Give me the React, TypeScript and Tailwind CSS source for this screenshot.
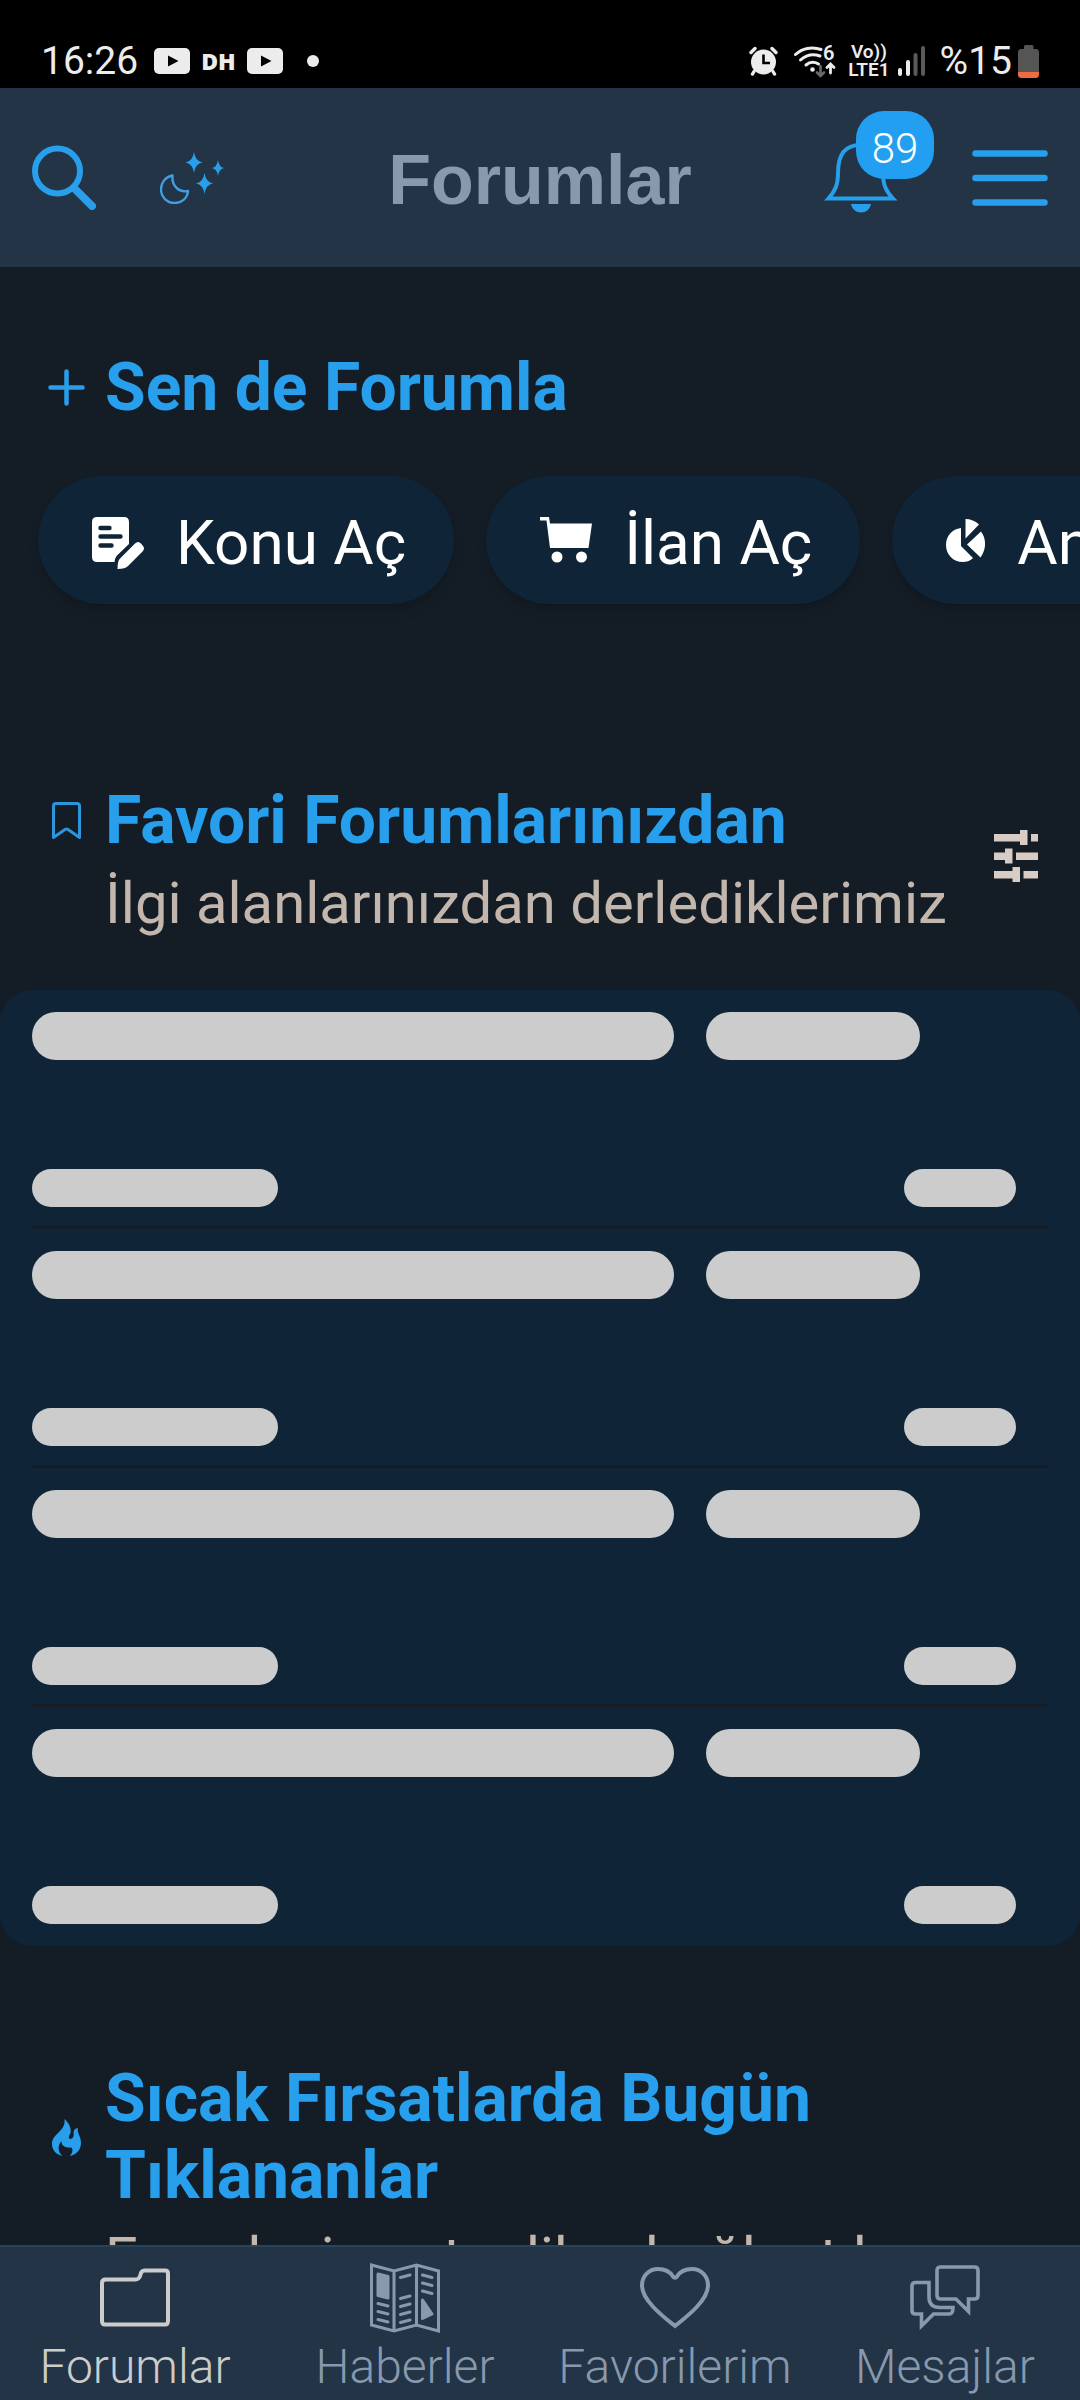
import { ReactNode } from "react";

const AlarmIcon = () => (
  <svg width="29" height="30" viewBox="0 0 29 30" fill="#ececec" aria-hidden="true">
    <circle cx="14.5" cy="16" r="12.5" />
    <path d="M2 6.5 6 2.5M27 6.5 23 2.5M5 25.5 3.5 28M24 25.5 25.5 28" stroke="#ececec" strokeWidth="3.4" strokeLinecap="round" />
    <path d="M14.5 8.5V17H21" stroke="#000" strokeWidth="2.6" fill="none" />
  </svg>
);

const WifiIcon = () => (
  <svg width="42" height="33" viewBox="0 0 42 33" fill="none" strokeLinecap="round" aria-hidden="true">
    <path d="M1.5 9.5C8 3.5 18 1 27 4.5" stroke="#ececec" strokeWidth="3" />
    <path d="M6.5 15C12 10 19 8.5 26 11" stroke="#ececec" strokeWidth="3" />
    <path d="M12 20C15.5 17 20 16.5 24.5 19" stroke="#ececec" strokeWidth="3" />
    <circle cx="18.5" cy="24.5" r="2.3" fill="#ececec" />
    <path d="M26.5 21V31M23 27.5 26.5 31 30 27.5" stroke="#6a6a6a" strokeWidth="2.6" />
    <path d="M36.500 28V19M33 22.5 36.5 19 40 22.5" stroke="#ececec" strokeWidth="2.8" />
    <text x="29" y="15" fill="#ececec" fontFamily="Roboto" fontWeight="600" fontSize="20">
      6
    </text>
  </svg>
);

const SignalIcon = () => (
  <svg width="28" height="30" viewBox="0 0 28 30" aria-hidden="true">
    <rect x="0" y="22" width="4" height="8" rx="2" fill="#ececec" />
    <rect x="8" y="14" width="4" height="16" rx="2" fill="#ececec" />
    <rect x="15.5" y="7" width="4" height="23" rx="2" fill="#5a5a5a" />
    <rect x="23" y="0" width="4" height="30" rx="2" fill="#5a5a5a" />
  </svg>
);

const BatteryIcon = () => (
  <svg width="21" height="33" viewBox="0 0 21 33" aria-hidden="true">
    <path d="M6 1.5Q6 0 7.5 0H14Q15.5 0 15.5 1.5V4H18Q21 4 21 7.5V27H0V7.5Q0 4 3 4H6Z" fill="#555" />
    <path d="M0 27H21V29.5Q21 33 17.5 33H3.5Q0 33 0 29.5Z" fill="#ee6a40" />
  </svg>
);

const VideoIcon = () => (
  <svg width="36" height="26" viewBox="0 0 36 26" aria-hidden="true">
    <rect width="36" height="26" rx="5" fill="#ececec" />
    <path d="M14 7.5V18.5L24.5 13Z" fill="#000" />
  </svg>
);

const SearchIcon = () => (
  <svg width="64" height="65" viewBox="0 0 64 65" fill="none" stroke="#279fec" aria-hidden="true">
    <circle cx="25.5" cy="26" r="22.5" strokeWidth="6" />
    <path d="M42 43 60 61" strokeWidth="8" strokeLinecap="round" />
  </svg>
);

const NightIcon = () => (
  <svg width="64" height="52" viewBox="0 0 64 52" fill="#279fec" aria-hidden="true">
    <path
      d="M12.5 23.5C5 25 1 31 1 37.5 1 45 7 51 14.5 51 22 51 27.5 46 28 39 19 41 11.5 34 12.5 23.5Z"
      fill="none"
      stroke="#3f9fe0"
      strokeWidth="2.4"
      strokeLinejoin="round"
    />
    <path d="M34 0Q35.5 9.5 42.5 10.5 35.5 11.5 34 21 32.5 11.5 25.5 10.5 32.5 9.5 34 0Z" />
    <path d="M58 8Q59 15 64 16 59 17 58 24 57 17 52 16 57 15 58 8Z" />
    <path d="M44.5 21Q46 30.5 53 31.5 46 32.5 44.5 42 43 32.5 36 31.5 43 30.5 44.5 21Z" />
  </svg>
);

const BellIcon = () => (
  <svg width="74" height="70" viewBox="0 0 74 70" aria-hidden="true">
    <path
      d="M4.5 55.5C11 48 14 42 14 30 14 10 22 2 36.5 2S59 10 59 30C59 42 62 48 69 55.5Z"
      fill="none"
      stroke="#279fec"
      strokeWidth="4"
    />
    <path d="M27 61H47C46 66 42 69.5 37 69.5S28 66 27 61Z" fill="#279fec" />
  </svg>
);

const MenuIcon = () => (
  <svg width="76" height="56" viewBox="0 0 76 56" stroke="#279fec" strokeWidth="6.5" strokeLinecap="round" aria-hidden="true">
    <path d="M3.5 3.5H72.5M3.5 28H72.5M3.5 52.5H72.5" />
  </svg>
);

const PlusIcon = () => (
  <svg width="37" height="37" viewBox="0 0 37 37" stroke="#279fec" strokeWidth="4.5" strokeLinecap="round" aria-hidden="true">
    <path d="M18.5 2.5V34.5M2.5 18.5H34.5" />
  </svg>
);

const BookmarkIcon = () => (
  <svg width="29" height="37" viewBox="0 0 29 37" fill="none" stroke="#2d95da" strokeWidth="3" strokeLinejoin="round" aria-hidden="true">
    <path d="M1.5 35.5V4Q1.5 1.5 4 1.5H25Q27.5 1.5 27.5 4V35.5L16 27.5Q14.5 26.5 13 27.5Z" />
  </svg>
);

const FlameIcon = () => (
  <svg width="29" height="37" viewBox="0 0 29 37" fill="#279fec" aria-hidden="true">
    <path d="M12.5 0C17 4 19.5 9 18.5 14 17 17 16 19 18 20 21 20 22 17 21.5 14 21.5 11 23 9.5 26 9 24.5 13 29 17 29 24 29 31 24 36 17.5 37 20 35 21.5 31 19.5 28.5 16.5 29 9 28.5 9.5 22 5.5 26 5.5 33 10.5 37 4 35.5 0 31 0 25 0 14 14 13 12.5 0Z" />
  </svg>
);

const EditNoteIcon = () => (
  <svg width="52" height="58" viewBox="0 -6 52 58" aria-hidden="true">
    <path d="M5 0H32Q37 0 37 5V27L24.5 39Q23 41 22.500 45H5Q0 45 0 40V5Q0 0 5 0Z" fill="#fff" />
    <path d="M8.5 11H17.5M8.5 19.5H28.5M8.5 28.5H19.5" stroke="#0f2437" strokeWidth="4.4" strokeLinecap="round" />
    <path d="M43 26.5Q46 23.5 49 26.5L51 29Q53 31.5 51 34L36 49Q33.5 52 25.5 52 25.5 44 28 41.5Z" fill="#fff" />
  </svg>
);

const CartIcon = () => (
  <svg width="52" height="46" viewBox="0 0 52 46" fill="#fff" aria-hidden="true">
    <path d="M0 0H9L10 6.5H52L48.5 31H10L6.5 3.5H0Z" />
    <circle cx="17" cy="40" r="5.5" />
    <circle cx="41.5" cy="40" r="5.5" />
  </svg>
);

const PollIcon = () => (
  <svg width="39" height="43" viewBox="0 0 39 43" fill="#fff" aria-hidden="true">
    <path d="M19.5 0Q27 0 33 5.5L19.5 19.5Z" />
    <path d="M35 12.5C40.5 20 40.5 30 34.5 38.5L21 25.5Z" />
    <path d="M15 9V27L27 39C24 42 20 43 17 43 7 43 0 35.5 0 26 0 17 6 10 15 9Z" />
  </svg>
);

const TuneIcon = () => (
  <svg width="44" height="52" viewBox="0 0 44 52" fill="#d8ccc4" aria-hidden="true">
    <path d="M0 4H26V0H33.5V15H26V11.5H0ZM37 4H44V11.5H37Z" />
    <path d="M0 22.5H11V18.5H18.5V33.5H11V30H0ZM22 22.5H44V30H22Z" />
    <path d="M0 41H18.5V37H26V52H18.5V48.5H0ZM29.5 41H44V48.5H29.5Z" />
  </svg>
);

const FolderIcon = () => (
  <svg width="70" height="70" viewBox="0 0 70 70" fill="none" stroke="currentColor" strokeWidth="4" strokeLinejoin="round" aria-hidden="true">
    <path d="M2 20Q2 16.5 5.5 16.5H35C40 16.5 40 13 41 10Q42 7.5 45 7.500H65Q68 7.5 68 10.5V58Q68 61.5 65 61.5H5Q2 61.5 2 58Z" />
  </svg>
);

const NewsIcon = () => (
  <svg width="70" height="70" viewBox="0 0 70 70" fill="none" stroke="currentColor" strokeWidth="3" aria-hidden="true">
    <path d="M1.5 2 24 8 46.5 2 68.5 8V68L46.5 62 24 68 1.5 62ZM24 8V68M46.5 2V62" />
    <path d="M8 11 18 13.5V35L8 32.5Z" fill="currentColor" strokeLinejoin="round" />
    <path
      d="M8 40.5 18 43M8 48.5 18 51M8 56.5 18 59M30.5 14.5 40 12M30.5 35.5 40 33M30.5 43.5 40 41M30.5 51.5 40 49M30.5 59.5 40 57M52.5 12 62 14.5M52.5 20 62 22.5M52.5 28 62 30.5"
      strokeLinecap="round"
    />
    <path d="M52.5 37 62 51 52.5 55.5Z" fill="currentColor" strokeLinejoin="round" />
  </svg>
);

const HeartIcon = () => (
  <svg width="70" height="70" viewBox="0 0 70 70" fill="none" stroke="currentColor" strokeWidth="4" aria-hidden="true">
    <path d="M35 63C25 55 2 38 2 22.5 2 13 9 6 18 6 25 6 30.5 9.5 33 13.5Q35 16 37 13.5C39.5 9.5 45 6 52 6 61 6 68 13 68 22.5 68 38 45 55 35 63Z" />
  </svg>
);

const ChatIcon = () => (
  <svg width="70" height="70" viewBox="0 0 70 70" fill="none" stroke="currentColor" strokeWidth="3.6" aria-hidden="true">
    <path d="M30 4H64.5Q68 4 68 7.5V32.5Q68 36 64.5 36H58.5V48.5L46 36H30.5Q27 36 27 32.5V7.5Q27 4 30 4Z" />
    <path d="M19 19.5H5.5Q2 19.5 2 23V47.5Q2 51 5.5 51H11.5V63L23.5 51H39Q43 51 43 44.5H30Q19 44.5 19 34Z" />
  </svg>
);

const StatusBar = () => (
  <div className="flex h-[88px] shrink-0 items-end justify-between bg-black pr-[41px] pb-[9px] pl-[41px] text-[#ececec]">
    <div className="flex h-9 items-center">
      <span className="text-[39px] leading-9">16:26</span>
      <span className="ml-4 flex items-center gap-[11px]">
        <VideoIcon />
        <span className="font-['Open_Sans'] text-[23px] leading-6 font-extrabold">DH</span>
        <VideoIcon />
      </span>
      <span className="ml-6 size-3 rounded-full bg-[#ececec]" />
    </div>
    <div className="flex h-9 items-center">
      <AlarmIcon />
      <span className="ml-4">
        <WifiIcon />
      </span>
      <span className="ml-3 flex flex-col text-center text-[19px] leading-[18px] font-semibold">
        <span>Vo))</span>
        <span>LTE1</span>
      </span>
      <span className="ml-2">
        <SignalIcon />
      </span>
      <span className="ml-[14px] text-[39px] leading-9">%15</span>
      <span className="ml-[6px]">
        <BatteryIcon />
      </span>
    </div>
  </div>
);

const Header = () => (
  <header className="grid h-[179px] shrink-0 grid-cols-[1fr_auto_1fr] items-center bg-[#233446] px-8">
    <div className="flex items-center gap-16">
      <button type="button" aria-label="Ara">
        <SearchIcon />
      </button>
      <button type="button" aria-label="Gece modu">
        <NightIcon />
      </button>
    </div>
    <h1 className="pt-1 font-['Liberation_Sans',sans-serif] text-[70px] leading-20 font-bold text-[#8899ad]">Forumlar</h1>
    <div className="flex items-center justify-end gap-[74px]">
      <button type="button" aria-label="Bildirimler" className="relative">
        <BellIcon />
        <span className="absolute -top-8 left-8 flex h-[68px] w-[78px] items-center justify-center rounded-[28px] bg-[#229ff0] pt-2 text-[42px] font-light text-white">
          89
        </span>
      </button>
      <button type="button" aria-label="Menü">
        <MenuIcon />
      </button>
    </div>
  </header>
);

const SectionTitle = ({ icon, title, subtitle }: { icon: ReactNode; title: string; subtitle?: string }) => (
  <div className="min-w-0 flex-1 pl-12">
    <div className="flex items-center gap-5">
      <span className="flex w-[37px] shrink-0 justify-center">{icon}</span>
      <h2 className="text-[66px] leading-[77px] font-bold text-[#279fec]">{title}</h2>
    </div>
    {subtitle && <p className="mt-[10px] pl-[57px] text-[58px] leading-[68px] whitespace-nowrap text-[#c2b6ad]">{subtitle}</p>}
  </div>
);

const actions = [
  { label: "Konu Aç", icon: <EditNoteIcon /> },
  { label: "İlan Aç", icon: <CartIcon /> },
  { label: "Anket Aç", icon: <PollIcon /> },
];

const SkeletonRow = () => (
  <li className="mx-8 border-b-[3px] border-[#141c25] pt-[22px] pr-8 pb-[19px] last:border-transparent">
    <div className="mr-24 flex gap-8">
      <div className="h-12 flex-3 rounded-full bg-[#ccc]" />
      <div className="h-12 flex-1 rounded-full bg-[#ccc]" />
    </div>
    <div className="mt-[109px] flex justify-between">
      <div className="h-[38px] w-1/4 rounded-full bg-[#ccc]" />
      <div className="h-[38px] w-28 rounded-full bg-[#ccc]" />
    </div>
  </li>
);

const tabs = [
  { label: "Forumlar", icon: <FolderIcon />, active: true },
  { label: "Haberler", icon: <NewsIcon /> },
  { label: "Favorilerim", icon: <HeartIcon /> },
  { label: "Mesajlar", icon: <ChatIcon /> },
];

const TabBar = () => (
  <nav className="grid h-[155px] shrink-0 grid-cols-4 border-t-2 border-[#25455e] bg-[#233446]">
    {tabs.map((tab) => (
      <a
        key={tab.label}
        href="#"
        aria-current={tab.active ? "page" : undefined}
        className={`flex flex-col items-center pt-4 text-[48px] leading-[56px] font-light ${tab.active ? "text-[#cccccc]" : "text-[#8899ad]"}`}
      >
        {tab.icon}
        <span className="mt-[6px]">{tab.label}</span>
      </a>
    ))}
  </nav>
);

const App = () => {
  return (
    <div lang="tr" className="flex h-screen flex-col overflow-hidden bg-[#141c25] font-[Roboto,sans-serif]">
      <StatusBar />
      <Header />
      <main className="min-h-0 flex-1 overflow-hidden">
        <section className="pt-[82px]">
          <SectionTitle icon={<PlusIcon />} title="Sen de Forumla" />
          <div className="mt-[50px] flex gap-8 pl-[38px]">
            {actions.map((action) => (
              <button
                key={action.label}
                type="button"
                className="flex h-32 shrink-0 items-center gap-8 rounded-full bg-[#0f2437] pr-12 pl-[54px] text-[62px] text-white shadow-lg"
              >
                {action.icon}
                <span className="pt-1">{action.label}</span>
              </button>
            ))}
          </div>
        </section>

        <section className="pt-[178px]">
          <div className="flex items-center">
            <SectionTitle icon={<BookmarkIcon />} title="Favori Forumlarınızdan" subtitle="İlgi alanlarınızdan derlediklerimiz" />
            <button type="button" aria-label="Düzenle" className="mr-[42px] pb-2">
              <TuneIcon />
            </button>
          </div>
          <ul className="mt-[53px] rounded-[32px] bg-[#0f2437]">
            <SkeletonRow />
            <SkeletonRow />
            <SkeletonRow />
            <SkeletonRow />
          </ul>
        </section>

        <section className="pt-[114px]">
          <SectionTitle icon={<FlameIcon />} title="Sıcak Fırsatlarda Bugün Tıklananlar" subtitle="En çok ziyaret edilen bağlantılar" />
        </section>
      </main>
      <TabBar />
    </div>
  );
};

export default App;
